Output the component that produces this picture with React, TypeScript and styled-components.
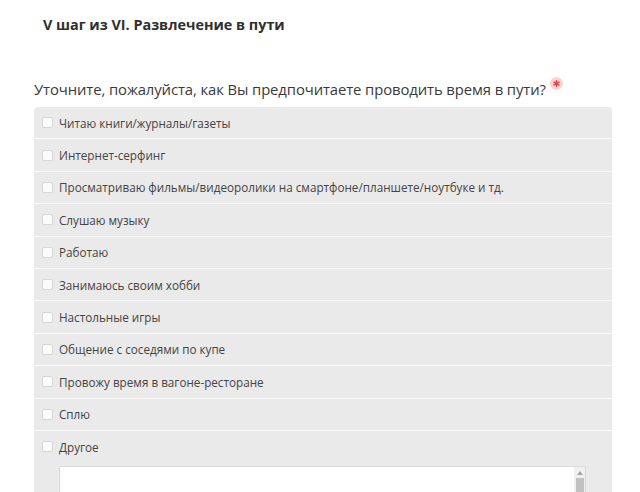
import React from "react";
import styled, { createGlobalStyle } from "styled-components";

const GlobalStyle = createGlobalStyle`
  html, body {
    margin: 0;
    padding: 0;
    background: #ffffff;
  }
  body {
    font-family: "Open Sans", "Noto Sans", "DejaVu Sans", sans-serif;
    color: #333;
    overflow: hidden;
  }
`;

const Page = styled.div`
  width: 640px;
  height: 492px;
  padding: 0 28px 0 34px;
  box-sizing: border-box;
  overflow: hidden;
`;

const StepTitle = styled.h2`
  margin: 0;
  padding: 14px 0 0 9px;
  font-size: 14.4px;
  line-height: 22px;
  font-weight: 700;
  color: #2f2f2f;
`;

const Question = styled.div`
  margin-top: 42px;
  display: flex;
  align-items: flex-start;
  font-size: 14.85px;
  line-height: 22px;
  color: #3a3a3a;
  letter-spacing: -0.1px;
`;

const Required = styled.span`
  display: inline-flex;
  align-items: center;
  justify-content: center;
  width: 13px;
  height: 13px;
  margin: -1px 0 0 4px;
  border-radius: 50%;
  background: #f9d2d2;
  svg {
    display: block;
  }
`;

const Panel = styled.div`
  margin-top: 7px;
  background: #eaeaea;
  border-radius: 4px;
  overflow: hidden;
`;

const Row = styled.label<{ $last?: boolean }>`
  display: flex;
  flex-direction: column;
  border-bottom: ${(p) => (p.$last ? "none" : "1px solid #fbfbfb")};
`;

const RowLine = styled.div`
  height: 31.4px;
  display: flex;
  align-items: center;
  padding-left: 8px;
  gap: 6px;
`;

const Box = styled.span`
  width: 11px;
  height: 11px;
  border: 1px solid #d6d6d6;
  border-radius: 2px;
  background: #fbfbfb;
  box-sizing: border-box;
`;

const Text = styled.span`
  font-size: 11.7px;
  color: #444;
`;

const Other = styled.div`
  margin: 4px 26px 0 25px;
  height: 40px;
  background: #fff;
  border: 1px solid #d8d8d8;
  border-bottom: none;
  border-radius: 2px 2px 0 0;
  display: flex;
  justify-content: flex-end;
`;

const Scroll = styled.div`
  width: 11px;
  background: #f0f0f0;
  display: flex;
  flex-direction: column;
  align-items: center;
  padding-top: 4px;
  gap: 3px;
  svg {
    display: block;
  }
`;

const Thumb = styled.div`
  width: 8px;
  flex: 1;
  background: #c1c1c1;
`;

const options = [
  "Читаю книги/журналы/газеты",
  "Интернет-серфинг",
  "Просматриваю фильмы/видеоролики на смартфоне/планшете/ноутбуке и тд.",
  "Слушаю музыку",
  "Работаю",
  "Занимаюсь своим хобби",
  "Настольные игры",
  "Общение с соседями по купе",
  "Провожу время в вагоне-ресторане",
  "Сплю",
  "Другое",
];

export default function App() {
  return (
    <>
      <GlobalStyle />
      <Page>
        <StepTitle>V шаг из VI. Развлечение в пути</StepTitle>
        <Question>
          Уточните, пожалуйста, как Вы предпочитаете проводить время в пути?
          <Required>
            <svg width="7" height="7" viewBox="0 0 10 10">
              <g stroke="#e0454b" strokeWidth="2.2" strokeLinecap="round">
                <line x1="5" y1="1" x2="5" y2="9" />
                <line x1="1.5" y1="3" x2="8.5" y2="7" />
                <line x1="1.5" y1="7" x2="8.5" y2="3" />
              </g>
            </svg>
          </Required>
        </Question>
        <Panel>
          {options.map((o, i) => {
            const last = i === options.length - 1;
            return (
              <Row key={o} $last={last}>
                <RowLine>
                  <Box />
                  <Text>{o}</Text>
                </RowLine>
                {last && (
                  <Other>
                    <Scroll>
                      <svg width="6" height="4" viewBox="0 0 6 4">
                        <path d="M0 4 L3 0 L6 4 Z" fill="#a3a3a3" />
                      </svg>
                      <Thumb />
                    </Scroll>
                  </Other>
                )}
              </Row>
            );
          })}
        </Panel>
      </Page>
    </>
  );
}
